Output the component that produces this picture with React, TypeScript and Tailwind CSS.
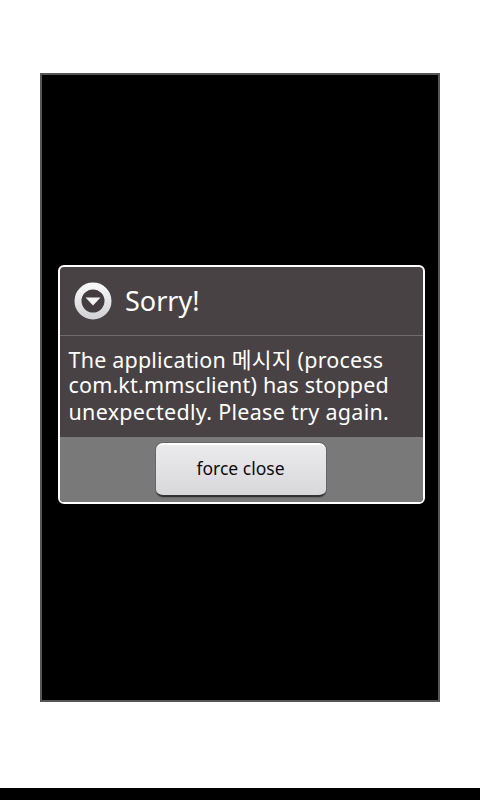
export default function App() {
  return (
    <div className="w-[480px] h-[800px] bg-white flex flex-col overflow-hidden" style={{ fontFamily: '"Noto Sans", "Noto Sans CJK KR", sans-serif' }}>
      <div className="h-[73px] shrink-0" />
      <div className="w-[400px] h-[629px] mx-auto bg-black border-2 border-[#555555] flex flex-col px-4 pt-[190px] shrink-0">
        <div className="w-[367px] h-[239px] border-2 border-white rounded-[6px] bg-[#484245] flex flex-col overflow-hidden">
          <div className="h-[68px] flex items-center pl-[14px] gap-[13px] border-b border-[#6f6b6d] box-content shrink-0">
            <svg width="38" height="38" viewBox="0 0 38 38">
              <defs>
                <linearGradient id="ring" x1="0" y1="0" x2="0" y2="1">
                  <stop offset="0" stopColor="#f7f7f8" />
                  <stop offset="1" stopColor="#d4d4d8" />
                </linearGradient>
              </defs>
              <circle cx="19" cy="19" r="15" fill="#433d40" stroke="url(#ring)" strokeWidth="7" />
              <path d="M11.5 15.5 H26.5 L19 23.5 Z" fill="#f4f4f5" />
            </svg>
            <span className="text-[27px] leading-none text-white relative -top-px">Sorry!</span>
          </div>
          <div className="h-[101px] pl-[8.5px] pt-[11px] text-[21.5px] leading-[26px] text-white shrink-0 whitespace-nowrap">
            <div className="tracking-[0.2px]">The application 메시지 (process</div>
            <div className="-mt-px tracking-[0.17px]">com.kt.mmsclient) has stopped</div>
            <div className="mt-px tracking-[0.3px]">unexpectedly. Please try again.</div>
          </div>
          <div className="flex-1 bg-[#797979] flex justify-center pt-[6px] pr-[2px]">
            <button className="w-[170px] h-[54px] pb-[3px] rounded-[7px] border-t-2 border-t-white border-b-2 border-b-[#333333] bg-gradient-to-b from-[#ebebed] to-[#d8d8da] text-[#0c0c0c] text-[17.5px] shadow-[0_0_0_1px_#55555580]">
              force close
            </button>
          </div>
        </div>
      </div>
      <div className="mt-auto h-[12px] bg-black shrink-0" />
    </div>
  );
}
